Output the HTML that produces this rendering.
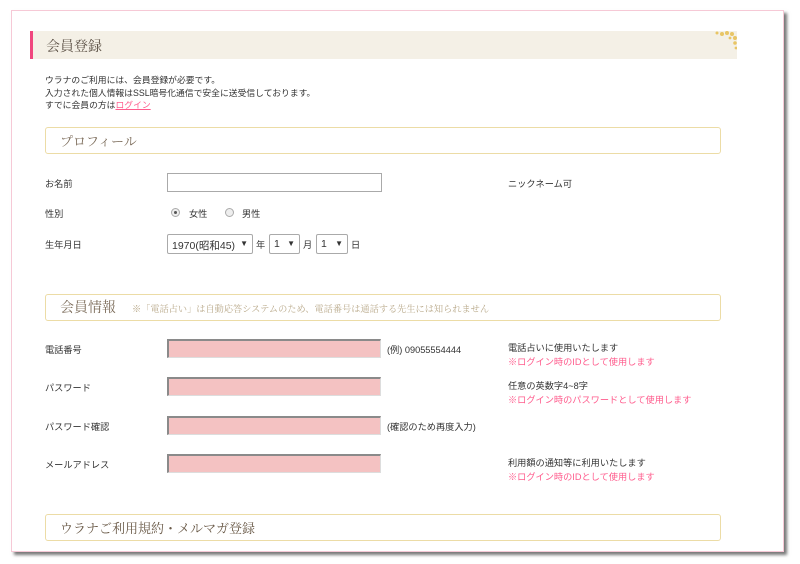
<!DOCTYPE html>
<html><head><meta charset="utf-8"><style>
*{margin:0;padding:0;box-sizing:border-box}
body{width:800px;height:564px;background:#fff;position:relative;overflow:hidden;font-family:"Liberation Sans","Noto Sans CJK JP",sans-serif;font-size:9.2px;color:#333}
.panel{position:absolute;left:11px;top:10px;width:773px;height:542px;background:#fff;border:1px solid #f6c9d6;box-shadow:3px 3px 3px #777}
.a{position:absolute;white-space:nowrap}
.hdr{position:absolute;left:30px;top:31px;width:707px;height:28px;background:#f4f0e6;border-left:3px solid #f0467e}
.hdr span{position:absolute;left:13px;top:5px;font-family:"Noto Serif CJK SC","Liberation Serif",serif;font-size:14px;color:#5a4f44}
.box{position:absolute;left:45px;width:676px;height:27px;border:1px solid #ecdca6;border-radius:3px;background:#fff}
.box span{position:absolute;left:14px;top:4px;font-family:"Noto Serif CJK SC","Liberation Serif",serif;font-size:13px;color:#7a6a58}
.in{position:absolute;left:167px;width:214px;height:19px;background:#f4c2c2;border-top:2px solid #8a8a8a;border-left:2px solid #8a8a8a;border-right:1px solid #ddd;border-bottom:1px solid #ddd}
.sel{position:absolute;top:234px;height:20px;border:1px solid #aaa;border-radius:2px;background:#fff;font-size:10.5px;padding:3px 4px}
.sel b{position:absolute;right:4px;top:4px;font-size:8px}
.pk{color:#ff5c8d}
.rad{position:absolute;width:9px;height:9px;border-radius:50%;border:1px solid #aaa;background:#eee}
</style></head><body>
<div class="panel"></div>
<div class="hdr"><span>会員登録</span></div>
<svg class="a" style="left:714px;top:31px" width="23" height="22"><g fill="#e8c565"><circle cx="3" cy="2" r="1.5"/><circle cx="8" cy="3" r="2"/><circle cx="13" cy="2" r="2"/><circle cx="18" cy="3" r="2"/><circle cx="21" cy="7" r="2"/><circle cx="21" cy="12" r="1.8"/><circle cx="22" cy="17" r="1.4"/><circle cx="16" cy="7" r="1.4"/></g></svg>
<div class="a" style="left:45px;top:74px;line-height:12.5px;font-size:8.8px">ウラナのご利用には、会員登録が必要です。<br>入力された個人情報はSSL暗号化通信で安全に送受信しております。<br>すでに会員の方は<span class="pk" style="text-decoration:underline">ログイン</span></div>
<div class="box" style="top:127px"><span style="top:3px">プロフィール</span></div>
<div class="a" style="left:45px;top:176px">お名前</div>
<div class="a" style="left:167px;top:173px;width:215px;height:19px;border:1px solid #aaa;background:#fff"></div>
<div class="a" style="left:508px;top:176px">ニックネーム可</div>
<div class="a" style="left:45px;top:206px">性別</div>
<div class="rad" style="left:171px;top:208px"><div style="position:absolute;left:2px;top:2px;width:3px;height:3px;border-radius:50%;background:#555"></div></div>
<div class="a" style="left:189px;top:206px">女性</div>
<div class="rad" style="left:225px;top:208px"></div>
<div class="a" style="left:242px;top:206px">男性</div>
<div class="a" style="left:45px;top:237px">生年月日</div>
<div class="sel" style="left:167px;width:86px">1970(昭和45)<b>▼</b></div>
<div class="a" style="left:256px;top:237px">年</div>
<div class="sel" style="left:269px;width:31px">1<b>▼</b></div>
<div class="a" style="left:303px;top:237px">月</div>
<div class="sel" style="left:316px;width:32px">1<b>▼</b></div>
<div class="a" style="left:351px;top:237px">日</div>
<div class="box" style="top:294px"><span style="font-size:14px;top:2px">会員情報</span><span style="left:86px;top:6px;font-size:9.2px;color:#b9a98a">※「電話占い」は自動応答システムのため、電話番号は通話する先生には知られません</span></div>
<div class="a" style="left:45px;top:342px">電話番号</div>
<div class="in" style="top:339px"></div>
<div class="a" style="left:387px;top:342px">(例) 09055554444</div>
<div class="a" style="left:508px;top:342px;line-height:13.5px">電話占いに使用いたします<br><span class="pk">※ログイン時のIDとして使用します</span></div>
<div class="a" style="left:45px;top:380px">パスワード</div>
<div class="in" style="top:377px"></div>
<div class="a" style="left:508px;top:380px;line-height:13.5px">任意の英数字4~8字<br><span class="pk">※ログイン時のパスワードとして使用します</span></div>
<div class="a" style="left:45px;top:419px">パスワード確認</div>
<div class="in" style="top:416px"></div>
<div class="a" style="left:387px;top:419px">(確認のため再度入力)</div>
<div class="a" style="left:45px;top:457px">メールアドレス</div>
<div class="in" style="top:454px"></div>
<div class="a" style="left:508px;top:457px;line-height:13.5px">利用額の通知等に利用いたします<br><span class="pk">※ログイン時のIDとして使用します</span></div>
<div class="box" style="top:514px"><span style="color:#6a5a48;top:3px">ウラナご利用規約・メルマガ登録</span></div>
</body></html>
